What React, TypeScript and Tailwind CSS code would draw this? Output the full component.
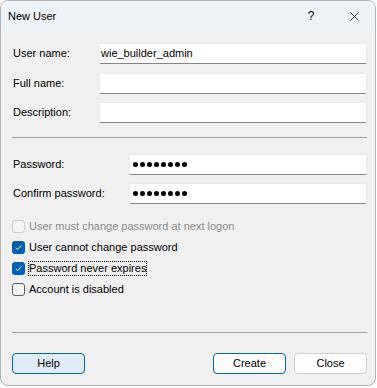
import { X } from "lucide-react";

const font = { fontFamily: '"Liberation Sans", Arial, sans-serif' };

function TextBox({ children, className = "" }: { children?: React.ReactNode; className?: string }) {
  return (
    <div
      className={`h-[21px] bg-white border border-[#ececec] border-b-[#868686] rounded-[2px] flex items-center px-[1px] text-[11px] text-black ${className}`}
    >
      {children}
    </div>
  );
}

function Dots() {
  return (
    <div className="flex items-center gap-[2px] pl-[2px]">
      {Array.from({ length: 8 }).map((_, i) => (
        <span key={i} className="w-[5px] h-[5px] rounded-full bg-black" />
      ))}
    </div>
  );
}

function Check({
  label,
  checked,
  disabled,
  focused,
}: {
  label: string;
  checked?: boolean;
  disabled?: boolean;
  focused?: boolean;
}) {
  return (
    <div className="h-[21px] flex items-center">
      {checked ? (
        <span className="w-[13px] h-[13px] rounded-[3px] bg-[#005fb8] flex items-center justify-center">
          <svg width="9" height="9" viewBox="0 0 9 9" fill="none">
            <path d="M1.8 4.8 L3.6 6.5 L7.3 2.6" stroke="white" strokeWidth="1" />
          </svg>
        </span>
      ) : (
        <span
          className={`w-[13px] h-[13px] rounded-[3px] border ${
            disabled ? "border-[#cdcdcd] bg-[#f4f4f4]" : "border-[#5f5f5f] bg-[#f7f7f7]"
          }`}
        />
      )}
      <span
        className={`ml-[4px] text-[11px] leading-[13px] ${disabled ? "text-[#8c8c8c]" : "text-black"} ${
          focused ? "outline outline-1 outline-dotted outline-black" : ""
        }`}
      >
        {label}
      </span>
    </div>
  );
}

export default function App() {
  return (
    <div className="w-[377px] h-[388px] bg-white" style={font}>
      <div className="w-[376px] h-[386px] rounded-[8px] border border-[#b5b5b5] bg-[#f0f0f0] overflow-hidden flex flex-col">
        {/* Title bar */}
        <div className="h-[30px] bg-[#eef3f9] flex items-center pl-[7px] text-black">
          <span className="text-[11px]">New User</span>
          <span className="ml-auto w-[20px] text-center text-[12px] mr-[26px]">?</span>
          <X size={15} strokeWidth={1.2} className="mr-[13px] text-black" />
        </div>

        <div className="pl-[11px] pr-[8px] flex flex-col">
          <div className="mt-[12px] flex items-center">
            <span className="w-[87px] pl-[1px] text-[11px]">User name:</span>
            <TextBox className="flex-1">wie_builder_admin</TextBox>
          </div>
          <div className="mt-[9px] flex items-center">
            <span className="w-[87px] pl-[1px] text-[11px]">Full name:</span>
            <TextBox className="flex-1" />
          </div>
          <div className="mt-[8px] flex items-center">
            <span className="w-[87px] pl-[1px] text-[11px]">Description:</span>
            <TextBox className="flex-1" />
          </div>

          <div className="mt-[14px] h-px bg-[#a0a0a0]" />

          <div className="mt-[16px] flex items-center">
            <span className="w-[117px] pl-[1px] text-[11px]">Password:</span>
            <TextBox className="flex-1">
              <Dots />
            </TextBox>
          </div>
          <div className="mt-[8px] flex items-center">
            <span className="w-[117px] pl-[1px] text-[11px]">Confirm password:</span>
            <TextBox className="flex-1">
              <Dots />
            </TextBox>
          </div>

          <div className="mt-[12px] flex flex-col">
            <Check label="User must change password at next logon" disabled />
            <Check label="User cannot change password" checked />
            <Check label="Password never expires" checked focused />
            <Check label="Account is disabled" />
          </div>

          <div className="mt-[32px] h-px bg-[#a0a0a0]" />

          <div className="mt-[20px] flex items-center">
            <button className="w-[73px] h-[21px] rounded-[4px] border border-[#0067c0] bg-[#e0ecf8] text-[11px] text-black">
              Help
            </button>
            <button className="ml-auto w-[73px] h-[21px] rounded-[4px] border border-[#0067c0] bg-[#fdfdfd] text-[11px] text-black">
              Create
            </button>
            <button className="ml-[8px] w-[73px] h-[21px] rounded-[4px] border border-[#d0d0d0] bg-[#fdfdfd] text-[11px] text-black">
              Close
            </button>
          </div>
        </div>
      </div>
    </div>
  );
}
